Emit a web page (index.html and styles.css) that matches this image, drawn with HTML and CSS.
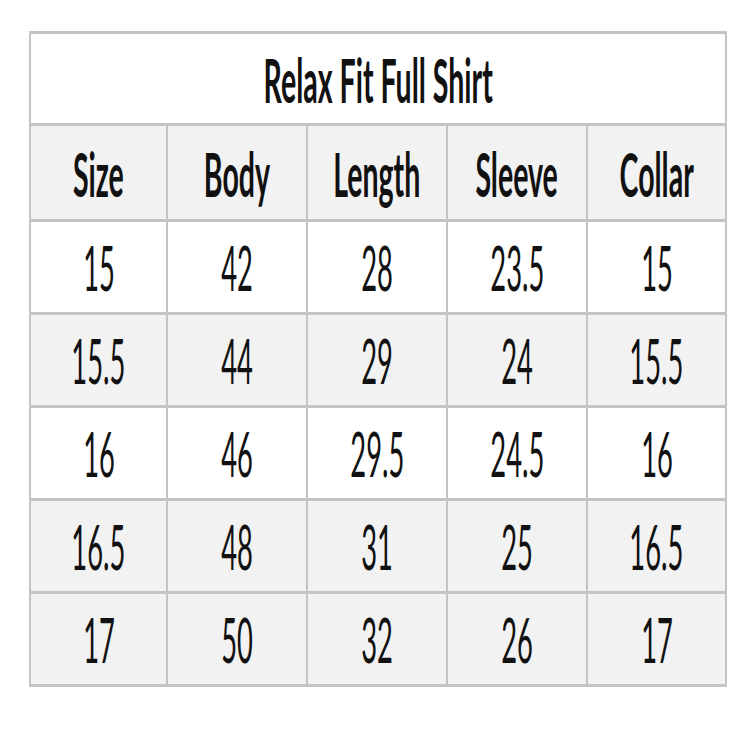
FILE: index.html
```html
<!DOCTYPE html>
<html>
<head>
<meta charset="utf-8">
<link rel="stylesheet" href="styles.css">
</head>
<body>
<div class="sheet">
  <div class="cell title"><span class="t bold">Relax Fit Full Shirt</span></div>

  <div class="cell gray"><span class="t bold">Size</span></div>
  <div class="cell gray"><span class="t bold">Body</span></div>
  <div class="cell gray"><span class="t bold">Length</span></div>
  <div class="cell gray"><span class="t bold">Sleeve</span></div>
  <div class="cell gray"><span class="t bold">Collar</span></div>

  <div class="cell"><span class="t">15</span></div>
  <div class="cell"><span class="t">42</span></div>
  <div class="cell"><span class="t">28</span></div>
  <div class="cell"><span class="t">23.5</span></div>
  <div class="cell"><span class="t">15</span></div>

  <div class="cell gray"><span class="t">15.5</span></div>
  <div class="cell gray"><span class="t">44</span></div>
  <div class="cell gray"><span class="t">29</span></div>
  <div class="cell gray"><span class="t">24</span></div>
  <div class="cell gray"><span class="t">15.5</span></div>

  <div class="cell"><span class="t">16</span></div>
  <div class="cell"><span class="t">46</span></div>
  <div class="cell"><span class="t">29.5</span></div>
  <div class="cell"><span class="t">24.5</span></div>
  <div class="cell"><span class="t">16</span></div>

  <div class="cell gray"><span class="t">16.5</span></div>
  <div class="cell gray"><span class="t">48</span></div>
  <div class="cell gray"><span class="t">31</span></div>
  <div class="cell gray"><span class="t">25</span></div>
  <div class="cell gray"><span class="t">16.5</span></div>

  <div class="cell gray"><span class="t">17</span></div>
  <div class="cell gray"><span class="t">50</span></div>
  <div class="cell gray"><span class="t">32</span></div>
  <div class="cell gray"><span class="t">26</span></div>
  <div class="cell gray"><span class="t">17</span></div>
</div>
</body>
</html>
```
FILE: styles.css
```css
html, body {
  margin: 0;
  padding: 0;
  background: #ffffff;
}

.sheet {
  margin: 31px 0 0 29px;
  width: 698px;
  box-sizing: border-box;
  display: grid;
  grid-template-columns: 135px 138px 138px 138px 137px;
  grid-template-rows: 89px 93px 90px 90px 90px 90px 90px;
  column-gap: 2px;
  row-gap: 3px;
  padding: 3px 2px;
  background: #c4c4c4;
  font-family: Lato, "Open Sans", sans-serif;
  color: #111111;
}

.cell {
  background: #ffffff;
  display: flex;
  align-items: center;
  justify-content: center;
  overflow: visible;
  min-width: 0;
}

.cell.gray {
  background: #f2f2f2;
}

.cell.title {
  grid-column: 1 / -1;
}

.t {
  display: inline-block;
  flex: none;
  white-space: nowrap;
  font-size: 62px;
  line-height: 1;
  font-weight: 400;
  transform: scaleX(0.44);
}

.t.bold {
  font-weight: 700;
  transform: scaleX(0.46);
}
```
